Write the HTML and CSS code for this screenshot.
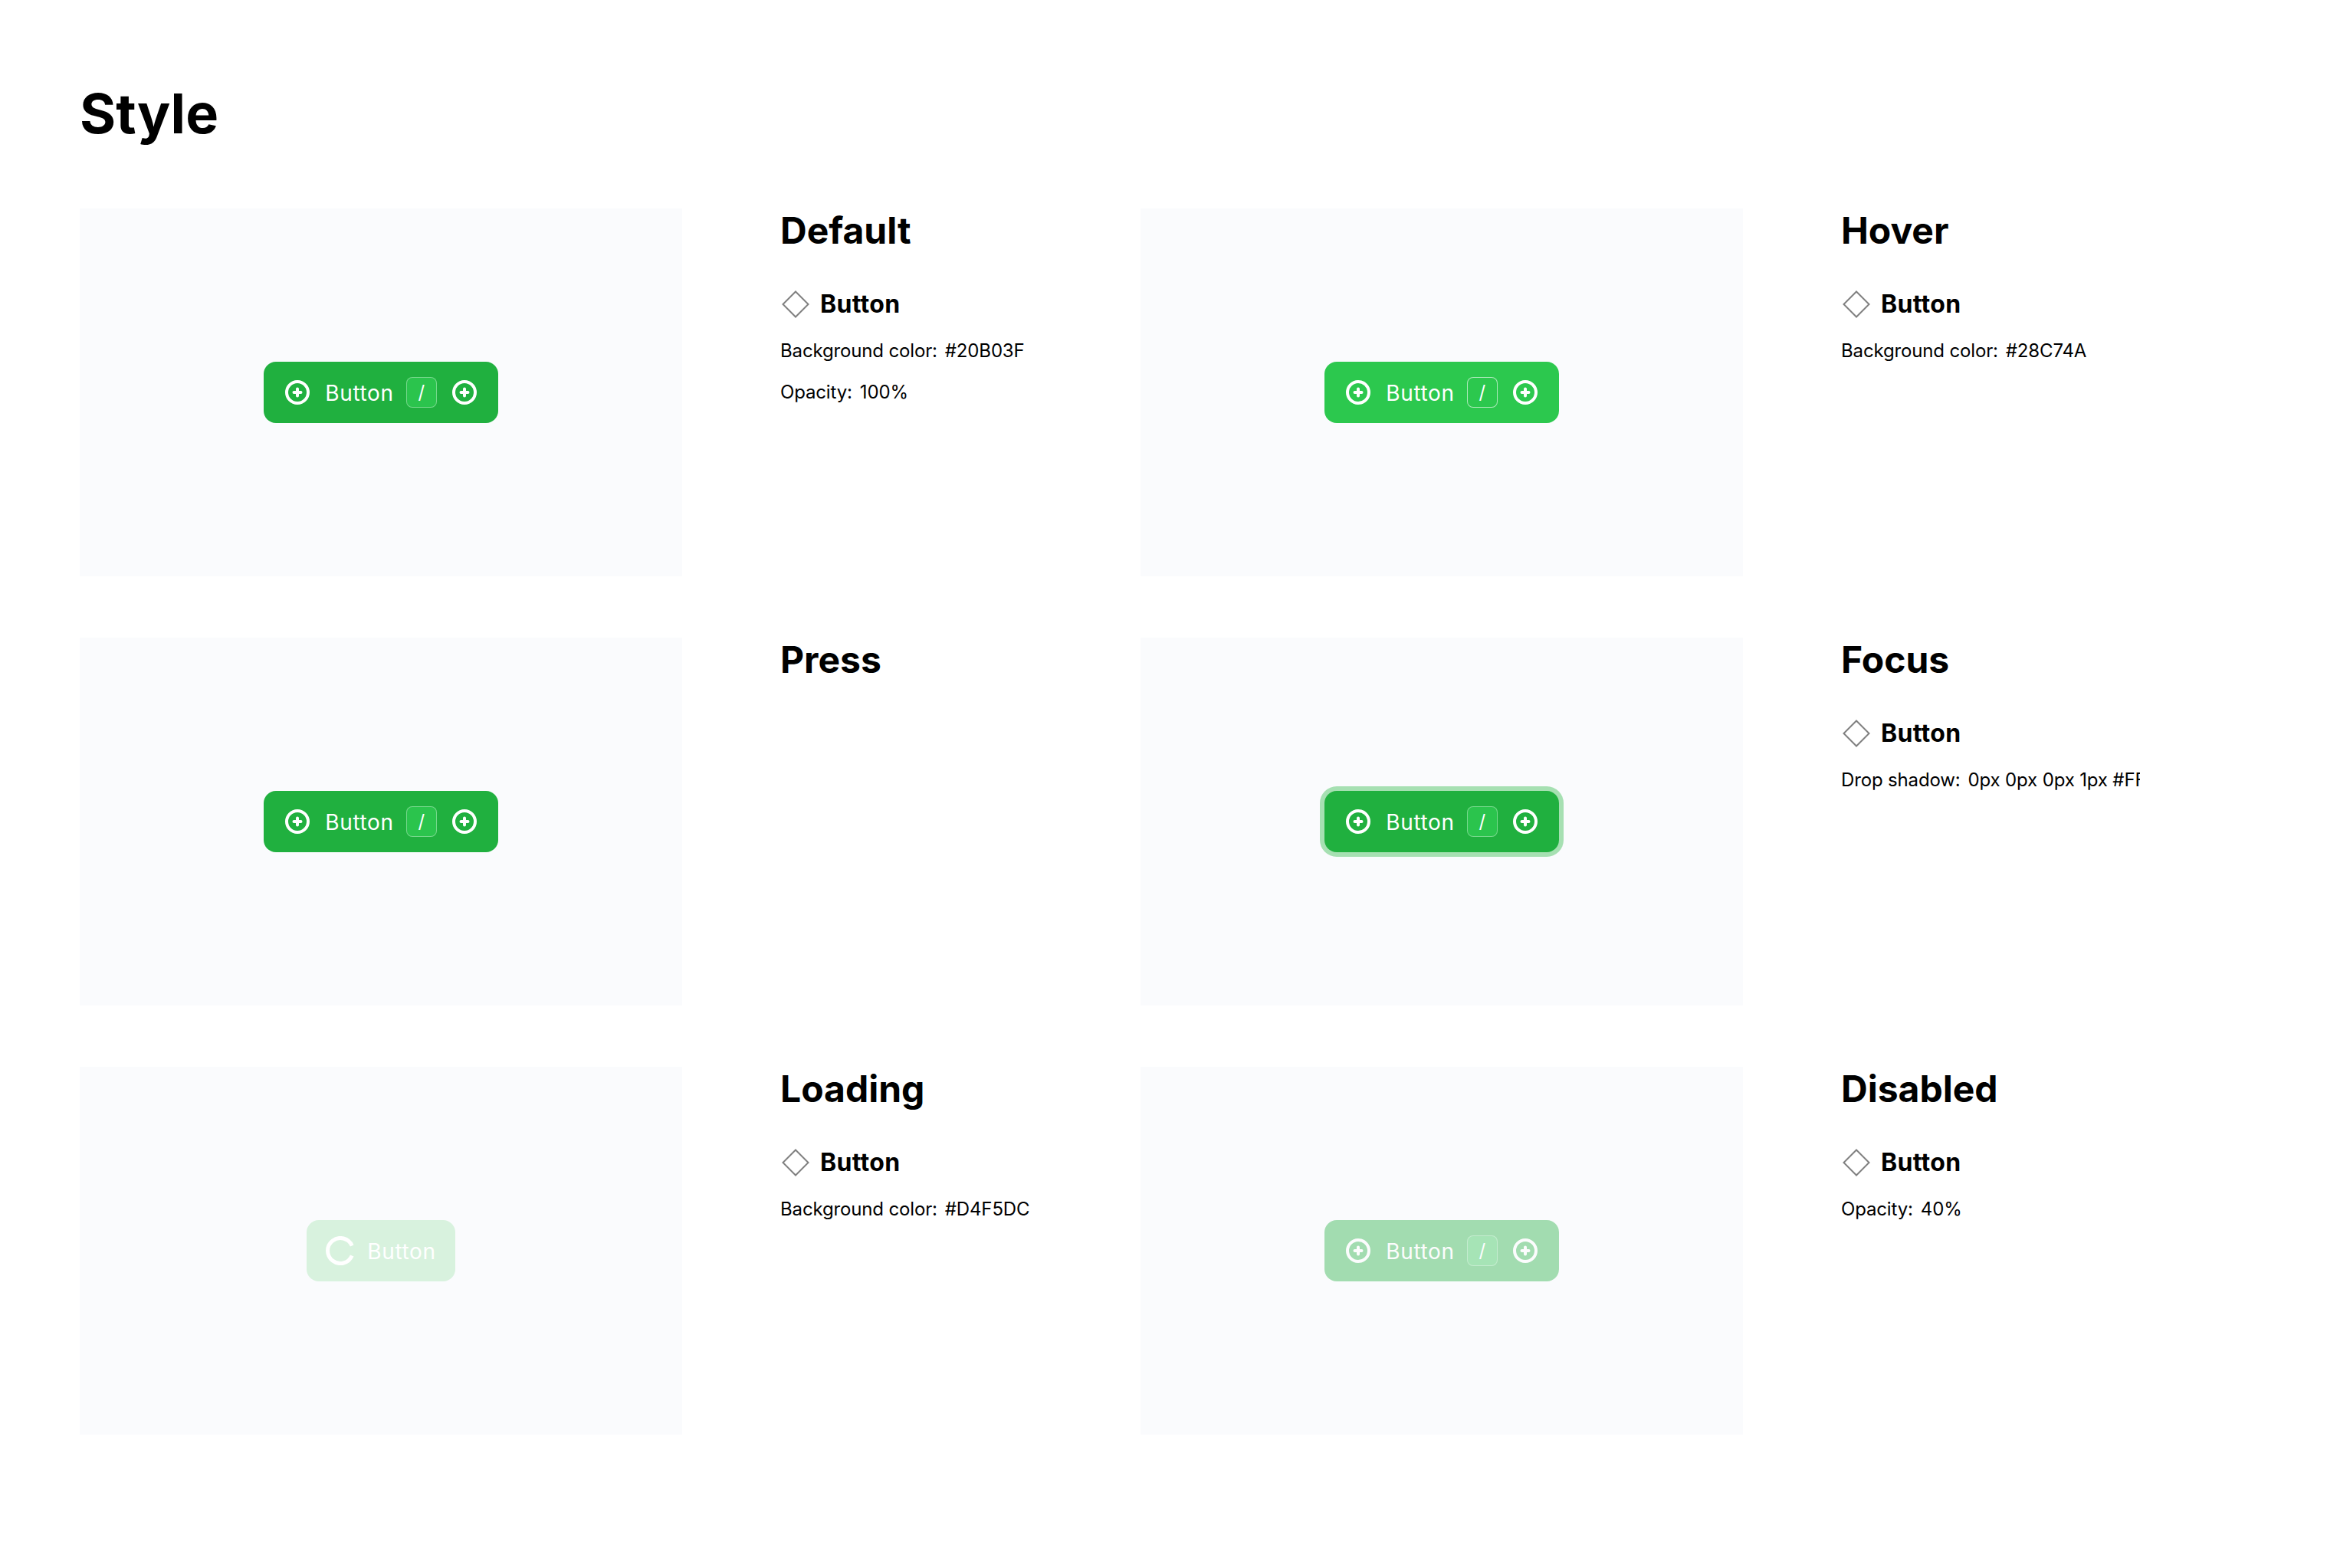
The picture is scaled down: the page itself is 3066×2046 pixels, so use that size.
FILE: index.html
```html
<!doctype html>
<html lang="en">
  <head>
    <meta charset="UTF-8" />
    <title>Style</title>
    <link rel="stylesheet" href="styles.css">
  </head>
  <body>
    <svg class="defs" width="0" height="0">
      <symbol id="plus-circle" viewBox="0 0 32 32">
        <circle cx="16" cy="16" r="14" fill="none" stroke="currentColor" stroke-width="4" />
        <path d="M16 11.500v9M11.500 16h9" fill="none" stroke="currentColor" stroke-width="4" stroke-linecap="round" />
      </symbol>
      <symbol id="diamond" viewBox="0 0 36 36">
        <path d="M18 1.500 34.500 18 18 34.500 1.500 18Z" fill="none" stroke="#808080" stroke-width="2" />
      </symbol>
    </svg>

    <h1 class="title">Style</h1>

    <div class="states">
      <div class="state">
        <div class="panel">
          <button class="btn">
            <svg class="icon"><use href="#plus-circle" /></svg>
            <span class="btn-text">Button</span>
            <span class="kbd">/</span>
            <svg class="icon"><use href="#plus-circle" /></svg>
          </button>
        </div>
        <div class="info">
          <h2>Default</h2>
          <div class="component"><svg class="diamond"><use href="#diamond" /></svg>Button</div>
          <p>Background color:<span class="val">#20B03F</span></p>
          <p>Opacity:<span class="val">100%</span></p>
        </div>
      </div>

      <div class="state">
        <div class="panel">
          <button class="btn btn-hover">
            <svg class="icon"><use href="#plus-circle" /></svg>
            <span class="btn-text">Button</span>
            <span class="kbd">/</span>
            <svg class="icon"><use href="#plus-circle" /></svg>
          </button>
        </div>
        <div class="info">
          <h2>Hover</h2>
          <div class="component"><svg class="diamond"><use href="#diamond" /></svg>Button</div>
          <p>Background color:<span class="val">#28C74A</span></p>
        </div>
      </div>

      <div class="state">
        <div class="panel">
          <button class="btn">
            <svg class="icon"><use href="#plus-circle" /></svg>
            <span class="btn-text">Button</span>
            <span class="kbd">/</span>
            <svg class="icon"><use href="#plus-circle" /></svg>
          </button>
        </div>
        <div class="info">
          <h2>Press</h2>
        </div>
      </div>

      <div class="state">
        <div class="panel">
          <button class="btn btn-focus">
            <svg class="icon"><use href="#plus-circle" /></svg>
            <span class="btn-text">Button</span>
            <span class="kbd">/</span>
            <svg class="icon"><use href="#plus-circle" /></svg>
          </button>
        </div>
        <div class="info">
          <h2>Focus</h2>
          <div class="component"><svg class="diamond"><use href="#diamond" /></svg>Button</div>
          <p>Drop shadow:<span class="val">0px 0px 0px 1px #FFFFFF</span></p>
        </div>
      </div>

      <div class="state">
        <div class="panel">
          <button class="btn btn-loading">
            <svg class="spinner" viewBox="0 0 38 38">
              <path d="M34.200 12.500A16.500 16.500 0 1 0 34.200 25.500" fill="none" stroke="currentColor" stroke-width="5" />
            </svg>
            <span class="btn-text">Button</span>
          </button>
        </div>
        <div class="info">
          <h2>Loading</h2>
          <div class="component"><svg class="diamond"><use href="#diamond" /></svg>Button</div>
          <p>Background color:<span class="val">#D4F5DC</span></p>
        </div>
      </div>

      <div class="state">
        <div class="panel">
          <button class="btn btn-disabled">
            <svg class="icon"><use href="#plus-circle" /></svg>
            <span class="btn-text">Button</span>
            <span class="kbd">/</span>
            <svg class="icon"><use href="#plus-circle" /></svg>
          </button>
        </div>
        <div class="info">
          <h2>Disabled</h2>
          <div class="component"><svg class="diamond"><use href="#diamond" /></svg>Button</div>
          <p>Opacity:<span class="val">40%</span></p>
        </div>
      </div>
    </div>
  </body>
</html>
```

FILE: styles.css
```css
body {
  margin: 0;
  padding: 104px 104px 0;
  background: #ffffff;
  color: #000000;
  font-family: Inter, "Liberation Sans", sans-serif;
}
.defs {
  position: absolute;
}
.title {
  margin: 0 0 80px;
  font-size: 72px;
  line-height: 88px;
  font-weight: 700;
}
.states {
  display: grid;
  grid-template-columns: 1306px 1306px;
  column-gap: 78px;
  row-gap: 80px;
}
.state {
  display: flex;
  height: 480px;
}
.panel {
  flex: none;
  width: 786px;
  height: 480px;
  background: #fafbfd;
  display: flex;
  align-items: center;
  justify-content: center;
}
.btn {
  display: flex;
  align-items: center;
  height: 80px;
  padding: 0 28px;
  border: none;
  border-radius: 16px;
  background: #20b03f;
  color: #ffffff;
  font-family: inherit;
  font-size: 28px;
}
.btn-hover {
  background: #2cc84e;
}
.btn-focus {
  box-shadow: 0 0 0 6px #a6e0b2;
}
.btn-disabled {
  opacity: 0.4;
}
.btn-loading {
  padding: 0 25px;
  background: #d8f2de;
}
.icon {
  flex: none;
  width: 32px;
  height: 32px;
}
.btn-text {
  margin-left: 20px;
  margin-top: 2px;
  line-height: 40px;
  letter-spacing: 0.67px;
}
.btn-loading .btn-text {
  margin-left: 16px;
}
.kbd {
  flex: none;
  box-sizing: border-box;
  width: 40px;
  height: 40px;
  margin: 0 20px 0 16px;
  border: 1.5px solid rgba(255, 255, 255, 0.35);
  border-radius: 8px;
  background: #2bc44d;
  font-size: 24px;
  line-height: 37px;
  text-align: center;
}
.btn-hover .kbd {
  background: #2cc84e;
  border-color: rgba(255, 255, 255, 0.6);
}
.spinner {
  flex: none;
  width: 38px;
  height: 38px;
}
.info {
  width: 390px;
  margin-left: 128px;
  overflow: hidden;
  white-space: nowrap;
}
.info h2 {
  margin: 0 0 47px;
  font-size: 48px;
  line-height: 58px;
  font-weight: 700;
}
.component {
  display: flex;
  align-items: center;
  gap: 14px;
  margin-bottom: 26px;
  font-size: 32px;
  line-height: 40px;
  font-weight: 700;
  letter-spacing: 0.3px;
}
.diamond {
  flex: none;
  width: 36px;
  height: 36px;
  margin-left: 2px;
}
.info p {
  margin: 0 0 24px;
  font-size: 24px;
  line-height: 30px;
  letter-spacing: -0.15px;
}
.val {
  margin-left: 10px;
}
```
